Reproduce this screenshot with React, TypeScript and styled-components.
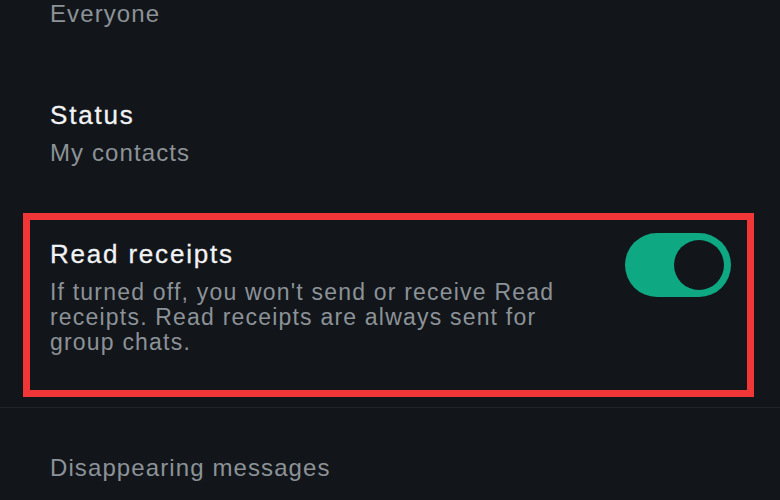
import React, { useState } from "react";
import styled, { createGlobalStyle } from "styled-components";

const GlobalStyle = createGlobalStyle`
  html, body {
    margin: 0;
    padding: 0;
    background: #12161a;
  }
  body {
    font-family: "Liberation Sans", Arial, sans-serif;
    -webkit-font-smoothing: antialiased;
  }
`;

const Screen = styled.div`
  width: 780px;
  height: 500px;
  overflow: hidden;
  background: #12161a;
  display: flex;
  flex-direction: column;
`;

const Item = styled.div<{ $top?: number }>`
  padding: ${(p) => p.$top ?? 0}px 0 0 50px;
`;

const Title = styled.div`
  color: #f1f2f3;
  font-size: 26px;
  line-height: 26px;
  letter-spacing: 1.8px;
  -webkit-text-stroke: 0.3px #f1f2f3;
`;

const Sub = styled.div<{ $gap?: number }>`
  margin-top: ${(p) => p.$gap ?? 0}px;
  color: #8c9298;
  font-size: 24px;
  line-height: 26px;
  letter-spacing: 1.1px;
`;

const Highlight = styled.div`
  margin: 47px 26px 0 23px;
  border: 7px solid #f03636;
  padding: 21px 16px 35px 20px;
  display: flex;
  justify-content: space-between;
  align-items: flex-start;
`;

const Texts = styled.div`
  flex: 0 1 530px;
  display: flex;
  flex-direction: column;
  gap: 13px;
`;

const Description = styled.div`
  color: #8c9298;
  font-size: 23px;
  line-height: 25px;
  letter-spacing: 1.2px;
`;

const Toggle = styled.button<{ $on: boolean }>`
  flex: none;
  width: 106px;
  height: 64px;
  margin-top: -8px;
  border: none;
  border-radius: 32px;
  padding: 0 7px;
  background: ${(p) => (p.$on ? "#0ea883" : "#3a4047")};
  display: flex;
  align-items: center;
  justify-content: ${(p) => (p.$on ? "flex-end" : "flex-start")};
  cursor: pointer;
`;

const Knob = styled.span`
  width: 50px;
  height: 50px;
  border-radius: 50%;
  background: #12161a;
`;

const Divider = styled.div`
  margin-top: 10px;
  height: 1px;
  background: #1f2429;
`;

export default function App() {
  const [readReceipts, setReadReceipts] = useState(true);

  return (
    <Screen>
      <GlobalStyle />
      <Item $top={1}>
        <Sub>Everyone</Sub>
      </Item>
      <Item $top={75}>
        <Title>Status</Title>
        <Sub $gap={12}>My contacts</Sub>
      </Item>
      <Highlight>
        <Texts>
          <Title>Read receipts</Title>
          <Description>
            If turned off, you won't send or receive Read receipts. Read
            receipts are always sent for group chats.
          </Description>
        </Texts>
        <Toggle
          $on={readReceipts}
          aria-label="Read receipts"
          onClick={() => setReadReceipts(!readReceipts)}
        >
          <Knob />
        </Toggle>
      </Highlight>
      <Divider />
      <Item $top={47}>
        <Sub>Disappearing messages</Sub>
      </Item>
    </Screen>
  );
}
